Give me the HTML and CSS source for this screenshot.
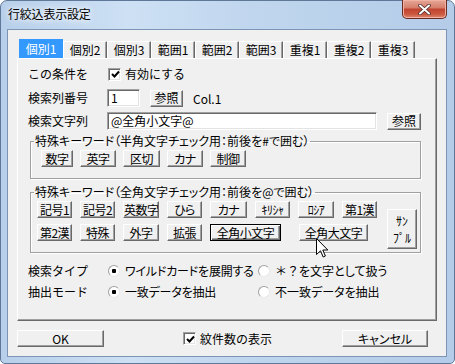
FILE: index.html
```html
<!DOCTYPE html>
<html lang="ja">
<head>
  <meta charset="UTF-8" />
  <title>行絞込表示設定</title>
  <link rel="stylesheet" href="styles.css">
</head>
<body>

  <div class="window">
    <!-- Title bar -->
    <div class="titlebar">
      <span class="title">行絞込表示設定</span>
      <div class="close">
        <svg width="13" height="11" viewBox="0 0 13 11">
          <path d="M2 1.5 L11 9.5 M11 1.5 L2 9.5" stroke="#4b2a2a" stroke-width="3.6" stroke-linecap="round"/>
          <path d="M2 1.5 L11 9.5 M11 1.5 L2 9.5" stroke="#fff" stroke-width="2" stroke-linecap="round"/>
        </svg>
      </div>
    </div>

    <div class="client">
      <!-- Tabs -->
      <div class="tabs">
        <div class="tab active">個別1</div>
        <div class="tab">個別2</div>
        <div class="tab">個別3</div>
        <div class="tab">範囲1</div>
        <div class="tab">範囲2</div>
        <div class="tab">範囲3</div>
        <div class="tab">重複1</div>
        <div class="tab">重複2</div>
        <div class="tab">重複3</div>
      </div>

      <div class="panel">
        <div class="row row-enable">
          <span class="label">この条件を</span>
          <span class="check checked">
            <svg width="9" height="9" viewBox="0 0 9 9"><path d="M1 4 L3.5 6.5 L8 1.5" fill="none" stroke="#000" stroke-width="2"/></svg>
          </span>
          <span class="check-text">有効にする</span>
        </div>

        <div class="row row-col">
          <span class="label">検索列番号</span>
          <div class="field field-col">1</div>
          <button class="btn btn-ref">参照</button>
          <span class="col-name">Col.1</span>
        </div>

        <div class="row row-text">
          <span class="label">検索文字列</span>
          <div class="field field-text">@全角小文字@</div>
          <button class="btn btn-ref2">参照</button>
        </div>

        <!-- Half-width keywords -->
        <fieldset class="group group-half">
          <legend>特殊キーワード（半角文字チェック用：前後を#で囲む）</legend>
          <div class="keys keys-half">
            <button class="btn key">数字</button>
            <button class="btn key">英字</button>
            <button class="btn key">区切</button>
            <button class="btn key">カナ</button>
            <button class="btn key">制御</button>
          </div>
        </fieldset>

        <!-- Full-width keywords -->
        <fieldset class="group group-full">
          <legend>特殊キーワード（全角文字チェック用：前後を@で囲む）</legend>
          <div class="group-body">
            <div class="keys keys-full">
              <button class="btn key">記号1</button>
              <button class="btn key">記号2</button>
              <button class="btn key">英数字</button>
              <button class="btn key">ひら</button>
              <button class="btn key">カナ</button>
              <button class="btn key">ｷﾘｼｬ</button>
              <button class="btn key">ﾛｼｱ</button>
              <button class="btn key">第1漢</button>
              <button class="btn key">第2漢</button>
              <button class="btn key">特殊</button>
              <button class="btn key">外字</button>
              <button class="btn key">拡張</button>
              <button class="btn key key-lower default">全角小文字</button>
              <button class="btn key key-upper">全角大文字</button>
            </div>
            <button class="btn sample"><span class="sample-line">ｻﾝ</span><span class="sample-line">ﾌﾟﾙ</span></button>
          </div>
        </fieldset>

        <div class="row row-radio row-type">
          <span class="label">検索タイプ</span>
          <span class="opt opt-first"><span class="radio on"></span>ワイルドカードを展開する</span>
          <span class="opt"><span class="radio"></span><span class="wide">＊？</span>を文字として扱う</span>
        </div>
        <div class="row row-radio row-mode">
          <span class="label">抽出モード</span>
          <span class="opt opt-first"><span class="radio on"></span>一致データを抽出</span>
          <span class="opt"><span class="radio"></span>不一致データを抽出</span>
        </div>
      </div>

      <!-- Footer -->
      <div class="footer">
        <button class="btn btn-ok">OK</button>
        <span class="check checked footer-check">
          <svg width="9" height="9" viewBox="0 0 9 9"><path d="M1 4 L3.5 6.5 L8 1.5" fill="none" stroke="#000" stroke-width="2"/></svg>
        </span>
        <span class="check-text">紋件数の表示</span>
        <button class="btn btn-cancel">キャンセル</button>
      </div>
    </div>

    <!-- mouse pointer -->
    <svg class="cursor" width="13" height="20" viewBox="0 0 13 20">
      <path d="M0.5 0.5 V16.5 L4.5 12.8 L7.2 19 L9.4 18 L6.8 12 H11.8 Z" fill="#fff" stroke="#000" stroke-width="1" stroke-linejoin="miter"/>
    </svg>
  </div>

</body>
</html>
```

FILE: styles.css
```css
* {
  box-sizing: border-box;
}

body {
  margin: 0;
  background: #fff;
  font-family: "Noto Sans CJK JP", sans-serif;
  font-size: 12px;
  color: #000;
}

/* WINDOW FRAME */
.window {
  position: relative;
  width: 455px;
  height: 364px;
  display: flex;
  flex-direction: column;
  background: linear-gradient(to right, #b7cfea 0%, #cde0f4 28%, #c0d6ee 55%, #b4cce8 100%);
  border: 1px solid #5f7898;
  border-radius: 7px 7px 5px 5px;
}

.titlebar {
  height: 28px;
  display: flex;
  justify-content: space-between;
  align-items: flex-start;
}

.title {
  margin: 6px 0 0 7px;
  line-height: 14px;
  text-shadow: 0 0 5px #fff, 0 0 8px #fff;
  letter-spacing: -0.2px;
}

.close {
  width: 45px;
  height: 19px;
  margin: -1px 7px 0 0;
  border: 1px solid #6c2b24;
  border-top: none;
  border-radius: 0 0 5px 5px;
  background: linear-gradient(#e6a797 0%, #d6806e 42%, #c24430 52%, #cc5a43 80%, #e08a70 100%);
  box-shadow: inset 0 0 0 1px #eeb3a3;
  display: flex;
  align-items: center;
  justify-content: center;
}

.client {
  flex: 1;
  margin: 0 7px 6px 6px;
  border: 1px solid #7d95b5;
  background: #f0f0f0;
  padding: 9px 9px 0 9px;
}

/* TABS */
.tabs {
  display: flex;
  align-items: flex-end;
  height: 19px;
  margin-left: 2px;
}

.tab {
  width: 44px;
  height: 17px;
  line-height: 15px;
  text-align: center;
  border-left: 1px solid #fff;
  border-top: 1px solid #fff;
  border-right: 1px solid #696969;
  box-shadow: inset -1px 0 #a0a0a0;
  font-feature-settings: "palt";
}

.tab.active {
  height: 19px;
  line-height: 18px;
  background: #3399ff;
  color: #fff;
  border-color: #3399ff;
  box-shadow: none;
}

/* PANEL */
.panel {
  height: 263px;
  border: 1px solid;
  border-color: #fff #696969 #696969 #fff;
  box-shadow: inset -1px -1px #a0a0a0;
  padding: 8px 0 0 10px;
}

.row {
  display: flex;
  align-items: center;
}

.label {
  width: 79px;
  flex: none;
  line-height: 14px;
}

.row-enable {
  height: 14px;
}

.row-col {
  height: 18px;
  margin-top: 8px;
}

.row-text {
  height: 18px;
  margin-top: 5px;
}

.check {
  width: 13px;
  height: 13px;
  flex: none;
  margin-left: 1px;
  background: #fff;
  border: 1px solid;
  border-color: #a0a0a0 #fff #fff #a0a0a0;
  box-shadow: inset 1px 1px #696969, inset -1px -1px #e3e3e3;
  display: flex;
  align-items: center;
  justify-content: center;
  padding: 1px 0 0 1px;
}

.check-text {
  margin-left: 4px;
  line-height: 14px;
}

.field {
  height: 18px;
  background: #fff;
  border: 1px solid;
  border-color: #a0a0a0 #fff #fff #a0a0a0;
  box-shadow: inset 1px 1px #696969, inset -1px -1px #e3e3e3;
  padding: 0 0 0 3px;
  line-height: 16px;
  font-feature-settings: "palt";
}

.field-col {
  width: 33px;
}

.field-text {
  width: 270px;
}

.col-name {
  margin-left: 10px;
}

/* BUTTONS */
.btn {
  font: inherit;
  color: #000;
  padding: 0;
  background: #f0f0f0;
  border: 1px solid;
  border-color: #fff #696969 #696969 #fff;
  box-shadow: inset -1px -1px #a0a0a0;
  line-height: 14px;
  white-space: nowrap;
  overflow: hidden;
  font-feature-settings: "palt";
}

.btn-ref {
  width: 33px;
  height: 17px;
  margin-left: 10px;
}

.btn-ref2 {
  width: 34px;
  height: 17px;
  margin-left: 10px;
}

/* GROUP BOXES */
.group {
  margin: 4px 0 0 2px;
  width: 391px;
  padding: 0;
  border: 1px solid #a0a0a0;
  box-shadow: 1px 1px 0 #fff, inset 1px 1px 0 #fff;
  min-width: 0;
}

.group legend {
  margin-left: 3px;
  padding: 0 1px;
  line-height: 14px;
  height: 14px;
  font-feature-settings: "palt";
}

.keys {
  display: grid;
}

.key {
  height: 17px;
  letter-spacing: -0.5px;
}

.keys-half {
  grid-template-columns: 39px 43px 44px 43px 43px;
  padding: 2px 0 11px 10px;
}

.keys-half .key {
  margin-right: 7px;
}

.group-full {
  margin-top: 6px;
}

.group-body {
  display: flex;
  align-items: flex-start;
  padding: 2px 0 3px 6px;
}

.keys-full {
  grid-template-columns: 43px 43px 44px 43px 45px 43px 44px 43px;
  row-gap: 6px;
}

.keys-full .key {
  margin-right: 8px;
}

.key-lower {
  grid-column: 5 / span 2;
  width: 71px;
}

.key-upper {
  grid-column: 7 / span 2;
  width: 69px;
  margin-left: 1px;
}

.default {
  border-color: #000;
  box-shadow: inset 1px 1px #fff, inset -1px -1px #696969, inset -2px -2px #a0a0a0;
}

.sample {
  width: 30px;
  height: 40px;
  margin: 8px 0 0 2px;
  display: flex;
  flex-direction: column;
  align-items: center;
  justify-content: center;
  gap: 3px;
}

.sample-line {
  line-height: 14px;
}

/* RADIO ROWS */
.row-radio {
  height: 16px;
}

.row-type {
  margin-top: 10px;
}

.row-mode {
  margin-top: 5px;
}

.opt {
  display: flex;
  align-items: center;
  gap: 5px;
  line-height: 14px;
  white-space: nowrap;
  font-feature-settings: "palt";
}

.opt-first {
  width: 150px;
  margin-left: 1px;
  letter-spacing: -0.2px;
}

.wide {
  font-feature-settings: normal;
  margin-right: -5px;
}

.radio {
  width: 12px;
  height: 12px;
  flex: none;
  border-radius: 50%;
  background: #fff;
  border: 1px solid;
  border-color: #a0a0a0 #e8e8e8 #e8e8e8 #a0a0a0;
  display: flex;
  align-items: center;
  justify-content: center;
}

.radio.on::after {
  content: "";
  width: 4px;
  height: 4px;
  background: #000;
  border-radius: 1px;
}

/* FOOTER */
.footer {
  display: flex;
  align-items: center;
  margin-top: 9px;
  height: 17px;
}

.btn-ok {
  width: 87px;
  height: 17px;
}

.footer-check {
  margin-left: 79px;
}

.btn-cancel {
  width: 86px;
  height: 17px;
  margin-left: auto;
  margin-right: 9px;
}

.cursor {
  position: absolute;
  left: 315px;
  top: 237px;
}
```
